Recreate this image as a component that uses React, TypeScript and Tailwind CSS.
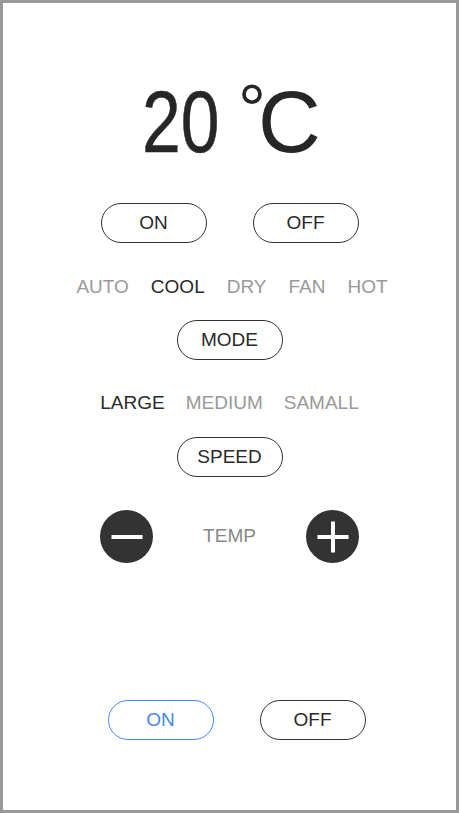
import React from "react";

const font = { fontFamily: '"Liberation Sans", Arial, sans-serif' };

function Pill({ label, blue = false }: { label: string; blue?: boolean }) {
  return (
    <div
      className={
        "flex h-[40px] w-[106px] items-center justify-center rounded-full border text-[19px] " +
        (blue ? "border-[#4a86f0] text-[#4a86f0]" : "border-[#333333] text-[#2a2a2a]")
      }
    >
      {label}
    </div>
  );
}

function CircleBtn({ plus = false }: { plus?: boolean }) {
  return (
    <div className="flex h-[53px] w-[53px] items-center justify-center rounded-full bg-[#333333]">
      <svg width="32" height="32" viewBox="0 0 32 32">
        <rect x="0.5" y="14" width="31" height="4" fill="#ffffff" />
        {plus && <rect x="14" y="0.5" width="4" height="31" fill="#ffffff" />}
      </svg>
    </div>
  );
}

export default function App() {
  return (
    <div
      className="box-border flex h-[813px] w-[459px] flex-col items-center border-[3px] border-[#999999] bg-white"
      style={font}
    >
      <div className="mt-[75px] flex h-[87px] items-start pl-[4px] text-[#262626]">
        <span className="inline-block w-[77px] origin-left scale-x-[0.8] whitespace-nowrap text-[87px] leading-[87px] [-webkit-text-stroke:0.5px_#262626]">
          20
        </span>
        <span className="-mt-[3px] ml-[19px] text-[70px] leading-[70px]">°</span>
        <span className="-ml-[8px] text-[87px] leading-[87px]">C</span>
      </div>

      <div className="mt-[38px] flex gap-[46px]">
        <Pill label="ON" />
        <Pill label="OFF" />
      </div>

      <div className="mt-[32px] flex h-[24px] items-center gap-[22px] pl-[5px] text-[19px] leading-[24px] text-[#999999]">
        <span>AUTO</span>
        <span className="text-[#2a2a2a]">COOL</span>
        <span>DRY</span>
        <span>FAN</span>
        <span>HOT</span>
      </div>

      <div className="mt-[21px]">
        <Pill label="MODE" />
      </div>

      <div className="mt-[31px] flex h-[24px] items-center gap-[21px] text-[19px] leading-[24px] text-[#999999]">
        <span className="text-[#2a2a2a]">LARGE</span>
        <span>MEDIUM</span>
        <span>SAMALL</span>
      </div>

      <div className="mt-[22px]">
        <Pill label="SPEED" />
      </div>

      <div className="mt-[33px] flex w-[259px] items-center justify-between">
        <CircleBtn />
        <span className="text-[19px] text-[#888888]">TEMP</span>
        <CircleBtn plus />
      </div>

      <div className="mt-[137px] flex gap-[46px] pl-[14px]">
        <Pill label="ON" blue />
        <Pill label="OFF" />
      </div>
    </div>
  );
}
